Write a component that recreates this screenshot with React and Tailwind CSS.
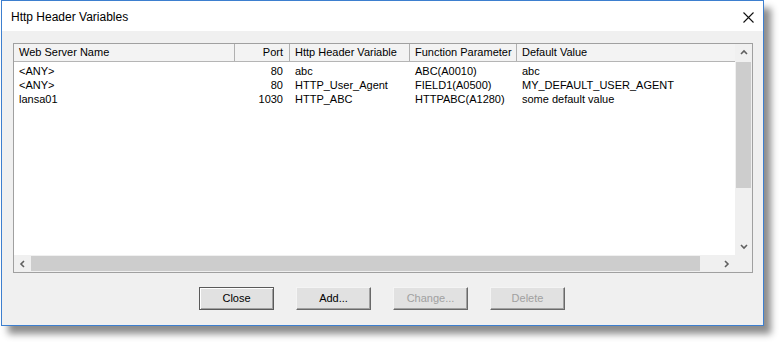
import React from "react";

const Chevron = ({ dir }) => {
  const paths = {
    up: "M1 5 L4 2 L7 5",
    down: "M1 2 L4 5 L7 2",
    left: "M5 1 L2 4 L5 7",
    right: "M2 1 L5 4 L2 7",
  };
  return (
    <svg width="8" height="8" viewBox="0 0 8 8">
      <path d={paths[dir]} fill="none" stroke="#606060" strokeWidth="1.6" />
    </svg>
  );
};

const rows = [
  ["<ANY>", "80", "abc", "ABC(A0010)", "abc"],
  ["<ANY>", "80", "HTTP_User_Agent", "FIELD1(A0500)", "MY_DEFAULT_USER_AGENT"],
  ["lansa01", "1030", "HTTP_ABC", "HTTPABC(A1280)", "some default value"],
];

const cols = [
  { w: "w-[221px]", label: "Web Server Name", right: false },
  { w: "w-[55px]", label: "Port", right: true },
  { w: "w-[120px]", label: "Http Header Variable", right: false },
  { w: "w-[107px]", label: "Function Parameter", right: false },
  { w: "w-[218px]", label: "Default Value", right: false },
];

export default function App() {
  return (
    <div className="w-[780px] h-[342px] bg-white overflow-hidden font-['Liberation_Sans',Arial,sans-serif] text-[11px] text-black">
      <div className="ml-[1px] w-[763px] h-[326px] border border-[#3d7fcf] bg-[#f0f0f0] flex flex-col shadow-[7px_8px_7px_rgba(0,0,0,0.45)]">
        {/* title bar */}
        <div className="h-[30px] bg-white flex items-center justify-between pl-[9px] pr-[9px] shrink-0">
          <span className="text-[12px] leading-none mt-[2px]">Http Header Variables</span>
          <svg width="11" height="11" viewBox="0 0 11 11" className="mt-[2px]">
            <path d="M0.5 0.5 L10.5 10.5 M10.5 0.5 L0.5 10.5" stroke="#111" strokeWidth="1.1" />
          </svg>
        </div>
        {/* body */}
        <div className="flex-1 pl-[11px] pt-[12px] flex flex-col">
          <div className="w-[740px] h-[230px] border border-[#a0a0a0] bg-white flex flex-col">
            <div className="flex flex-1 min-h-0">
              <div className="w-[721px] flex flex-col">
                <div className="h-[18px] flex bg-[#f3f3f3] border-b border-[#b5b5b5]">
                  {cols.map((c, i) => (
                    <div
                      key={i}
                      className={`${c.w} h-full flex items-center ${c.right ? "justify-end pr-[6px]" : "pl-[5px]"} ${i < 4 ? "border-r border-[#b0b0b0]" : ""} shrink-0`}
                    >
                      {c.label}
                    </div>
                  ))}
                </div>
                <div className="pt-[2px] flex flex-col">
                  {rows.map((r, ri) => (
                    <div key={ri} className="h-[14px] flex items-center">
                      {r.map((v, ci) => (
                        <div
                          key={ci}
                          className={`${cols[ci].w} shrink-0 whitespace-nowrap ${cols[ci].right ? "text-right pr-[7px]" : "pl-[5px]"}`}
                        >
                          {v}
                        </div>
                      ))}
                    </div>
                  ))}
                </div>
              </div>
              {/* vertical scrollbar */}
              <div className="w-[17px] bg-[#f0f0f0] flex flex-col">
                <div className="h-[17px] flex items-center justify-center">
                  <Chevron dir="up" />
                </div>
                <div className="flex-1 flex flex-col">
                  <div className="h-[126px] mx-[1px] mt-[1px] bg-[#cdcdcd]" />
                </div>
                <div className="h-[17px] flex items-center justify-center">
                  <Chevron dir="down" />
                </div>
              </div>
            </div>
            {/* horizontal scrollbar */}
            <div className="h-[17px] flex bg-[#f0f0f0]">
              <div className="w-[17px] flex items-center justify-center">
                <Chevron dir="left" />
              </div>
              <div className="w-[669px] my-[1px] bg-[#cdcdcd]" />
              <div className="w-[18px]" />
              <div className="w-[17px] flex items-center justify-center">
                <Chevron dir="right" />
              </div>
              <div className="w-[17px] bg-[#f0f0f0]" />
            </div>
          </div>
          {/* buttons */}
          <div className="flex gap-[22px] mt-[14px] ml-[186px]">
            <div className="w-[75px] h-[23px] border border-[#5a5a5a] bg-[#e1e1e1] flex items-center justify-center shadow-[inset_1px_1px_0_#ffffff,inset_-1px_-1px_0_#a0a0a0]">
              Close
            </div>
            <div className="w-[75px] h-[23px] border-t border-l border-[#f4f4f4] border-r-[#696969] border-b-[#696969] border-r border-b bg-[#e1e1e1] flex items-center justify-center shadow-[inset_-1px_-1px_0_#a0a0a0]">
              Add...
            </div>
            <div className="w-[75px] h-[23px] border-t border-l border-[#f4f4f4] border-r-[#696969] border-b-[#696969] border-r border-b bg-[#e1e1e1] flex items-center justify-center text-[#a0a0a0] shadow-[inset_-1px_-1px_0_#a0a0a0]">
              Change...
            </div>
            <div className="w-[75px] h-[23px] border-t border-l border-[#f4f4f4] border-r-[#696969] border-b-[#696969] border-r border-b bg-[#e1e1e1] flex items-center justify-center text-[#a0a0a0] shadow-[inset_-1px_-1px_0_#a0a0a0]">
              Delete
            </div>
          </div>
        </div>
      </div>
    </div>
  );
}
